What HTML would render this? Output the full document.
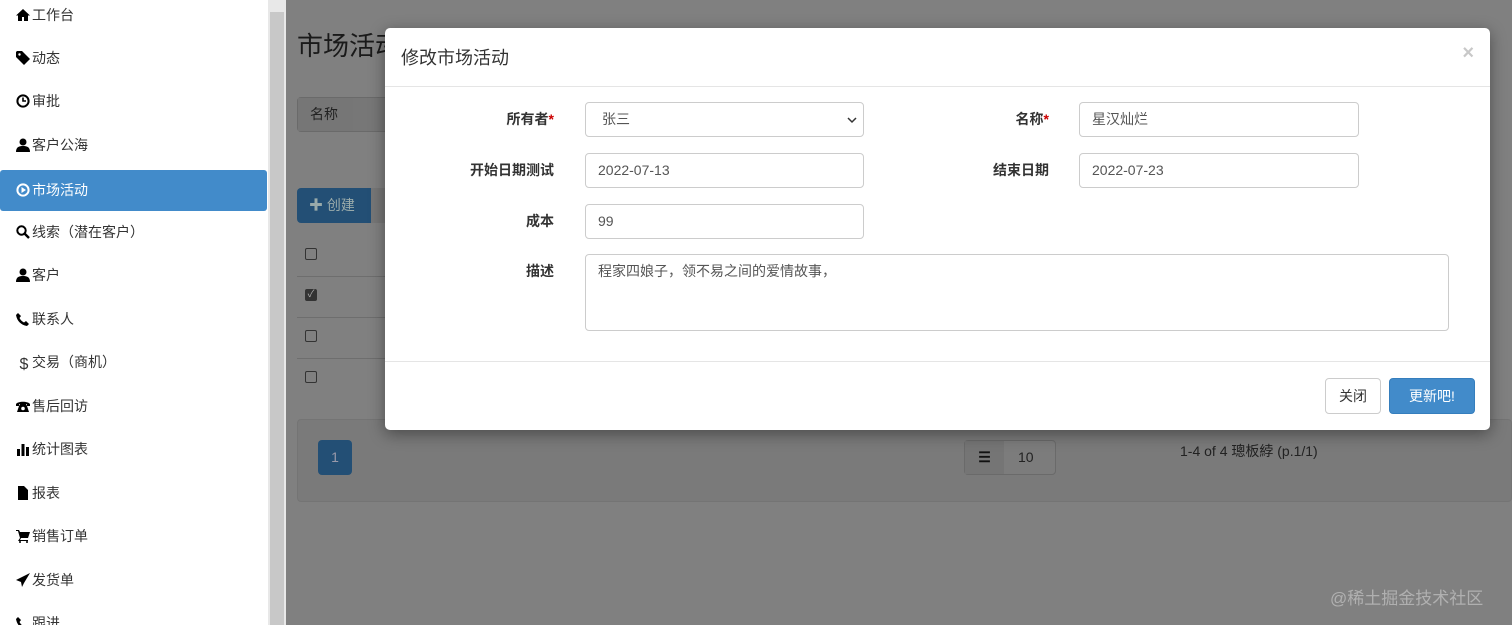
<!DOCTYPE html>
<html><head><meta charset="utf-8"><style>
*{box-sizing:border-box;margin:0;padding:0}
html,body{width:1512px;height:625px;overflow:hidden}
body{position:relative;background:#808080;font-family:"Liberation Sans","Noto Sans CJK SC",sans-serif;font-size:14px;color:#333}
.side{position:absolute;left:0;top:0;width:268px;height:625px;background:#fff;overflow:hidden}
.item{position:absolute;left:0;width:267px;height:41px;line-height:41px;padding-left:16px;font-size:14px;color:#333}
.item.act{background:#428bca;color:#fff;border-radius:3px}
.ic{display:inline-block;width:16px;height:14px;vertical-align:-2px}
.ic svg{width:14px;height:14px;display:block}
.sb{position:absolute;left:268px;top:0;width:18px;height:625px;background:#e8e8e8}
.sb i{position:absolute;left:2px;top:12px;width:14px;height:613px;background:#c8c8c8}
.dk{position:absolute}
.modal{position:absolute;left:385px;top:28px;width:1105px;height:402px;background:#fff;border-radius:5px;box-shadow:0 4px 16px rgba(0,0,0,.4)}
.hd{height:59px;border-bottom:1px solid #e5e5e5;padding:16px 16px;font-size:18px}
.x{position:absolute;right:16px;top:14px;font-size:20px;color:#c8c8c8;font-weight:bold}
.lb{position:absolute;font-weight:bold;text-align:right;font-size:14px}
.lb b{color:#c00}
.in{position:absolute;height:35px;border:1px solid #ccc;border-radius:4px;padding:0 12px;line-height:33px;color:#555;font-size:14px}
.ft{position:absolute;left:0;top:333px;width:100%;border-top:1px solid #e5e5e5}
.btn{position:absolute;height:36px;line-height:34px;border-radius:4px;font-size:14px;text-align:center}
</style></head><body>
<div class="side">
<div class="item" style="top:-5px"><span class="ic"><svg viewBox="0 0 14 14"><path d="M7 1L0 7.5h2V13h4V9h2v4h4V7.5h2z" fill="#000"/></svg></span>工作台</div>
<div class="item" style="top:38px"><span class="ic"><svg viewBox="0 0 14 14"><path d="M0 1v5l8 8 6-6-8-8H1z" fill="#000"/><circle cx="3.5" cy="3.5" r="1.2" fill="#fff"/></svg></span>动态</div>
<div class="item" style="top:81px"><span class="ic"><svg viewBox="0 0 14 14"><circle cx="7" cy="7" r="5.6" fill="none" stroke="#000" stroke-width="2"/><path d="M7 3.5V7h3" fill="none" stroke="#000" stroke-width="1.6"/></svg></span>审批</div>
<div class="item" style="top:125px"><span class="ic"><svg viewBox="0 0 14 14"><circle cx="7" cy="4" r="3.5" fill="#000"/><path d="M0 14c0-5 3-6 7-6s7 1 7 6z" fill="#000"/></svg></span>客户公海</div>
<div class="item act" style="top:170px"><span class="ic"><svg viewBox="0 0 14 14"><circle cx="7" cy="7" r="5.6" fill="none" stroke="#fff" stroke-width="2"/><path d="M5.5 4v6l4.5-3z" fill="#fff"/></svg></span>市场活动</div>
<div class="item" style="top:212px"><span class="ic"><svg viewBox="0 0 14 14"><circle cx="5.5" cy="5.5" r="4.2" fill="none" stroke="#000" stroke-width="2"/><path d="M8.5 8.5L13 13" stroke="#000" stroke-width="2.4"/></svg></span>线索（潜在客户）</div>
<div class="item" style="top:255px"><span class="ic"><svg viewBox="0 0 14 14"><circle cx="7" cy="4" r="3.5" fill="#000"/><path d="M0 14c0-5 3-6 7-6s7 1 7 6z" fill="#000"/></svg></span>客户</div>
<div class="item" style="top:299px"><span class="ic"><svg viewBox="0 0 14 14"><path d="M2 1l3 3-1.5 2c1 2 2.5 3.5 4.5 4.5L10 9l3 3-2 2C5 13 1 9 0 3z" fill="#000"/></svg></span>联系人</div>
<div class="item" style="top:342px"><span class="ic" style="font-weight:normal;font-size:16px;text-align:center">$</span>交易（商机）</div>
<div class="item" style="top:386px"><span class="ic"><svg viewBox="0 0 14 14"><path d="M0 5c2-3 12-3 14 0v2h-3V5H3v2H0zM3 7l1-2h6l1 2 2 6H1z" fill="#000"/><circle cx="7" cy="9.5" r="1.8" fill="#fff"/></svg></span>售后回访</div>
<div class="item" style="top:429px"><span class="ic"><svg viewBox="0 0 14 14"><path d="M1 7h3v7H1zM5.5 2h3v12h-3zM10 5h3v9h-3z" fill="#000"/></svg></span>统计图表</div>
<div class="item" style="top:473px"><span class="ic"><svg viewBox="0 0 14 14"><path d="M2 0h6l4 4v10H2z" fill="#000"/></svg></span>报表</div>
<div class="item" style="top:516px"><span class="ic"><svg viewBox="0 0 14 14"><path d="M0 1h3l1 2h10l-2 6H5l-1 2h8v1H2l2-3-2-7H0z" fill="#000"/><circle cx="4" cy="13" r="1" fill="#000"/><circle cx="11" cy="13" r="1" fill="#000"/></svg></span>销售订单</div>
<div class="item" style="top:560px"><span class="ic"><svg viewBox="0 0 14 14"><path d="M14 0L0 7l5 2 1 5 2-4z M14 0L5 9" fill="#000"/></svg></span>发货单</div>
<div class="item" style="top:603px"><span class="ic"><svg viewBox="0 0 14 14"><path d="M2 1l3 3-1.5 2c1 2 2.5 3.5 4.5 4.5L10 9l3 3-2 2C5 13 1 9 0 3z" fill="#000"/></svg></span>跟进</div>
</div>
<div class="sb"><i></i></div>
<div class="dk" style="left:297px;top:26px;font-size:26px;color:#1a1a1a">市场活动</div>
<div class="dk" style="left:297px;top:97px;width:100px;height:35px;border:1px solid #6a6a6a;border-radius:4px;background:#777"></div>
<div class="dk" style="left:298px;top:98px;width:55px;height:33px;background:#767676;line-height:33px;padding-left:12px;color:#222">名称</div>
<div class="dk" style="left:297px;top:188px;width:74px;height:35px;background:#234f75;border-radius:4px 0 0 4px;color:#9aa;line-height:35px;padding-left:12px">✚ 创建</div>
<div class="dk" style="left:371px;top:188px;width:20px;height:35px;background:#777"></div>
<div class="dk" style="left:297px;top:276px;width:100px;height:1px;background:#6e6e6e"></div>
<div class="dk" style="left:297px;top:317px;width:100px;height:1px;background:#6e6e6e"></div>
<div class="dk" style="left:297px;top:358px;width:100px;height:1px;background:#6e6e6e"></div>
<div class="dk" style="left:305px;top:248px;width:12px;height:12px;border:1px solid #333;border-radius:2px"></div>
<div class="dk" style="left:305px;top:289px;width:12px;height:12px;background:#333;border-radius:2px;color:#aaa;font-size:10px;line-height:12px;text-align:center">✓</div>
<div class="dk" style="left:305px;top:330px;width:12px;height:12px;border:1px solid #333;border-radius:2px"></div>
<div class="dk" style="left:305px;top:371px;width:12px;height:12px;border:1px solid #333;border-radius:2px"></div>
<div class="dk" style="left:297px;top:419px;width:1215px;height:83px;background:#7a7a7a;border:1px solid #747474;border-radius:4px"></div>
<div class="dk" style="left:318px;top:440px;width:34px;height:35px;background:#234f75;border-radius:4px;color:#99a;text-align:center;line-height:35px">1</div>
<div class="dk" style="left:964px;top:440px;width:92px;height:35px;border:1px solid #6a6a6a;border-radius:4px;background:#7c7c7c"></div>
<div class="dk" style="left:965px;top:441px;width:39px;height:33px;background:#757575;color:#111;text-align:center;line-height:33px;font-weight:bold">☰</div>
<div class="dk" style="left:1018px;top:449px;color:#222">10</div>
<div class="dk" style="left:1180px;top:441px;color:#222">1-4 of 4 璁板綍 (p.1/1)</div>
<div class="dk" style="left:1330px;top:584px;color:#b0b0b0;font-size:17px">@稀土掘金技术社区</div>

<div class="modal">
<div class="hd">修改市场活动</div><div class="x">×</div>
<div class="lb" style="right:936px;top:81px">所有者<b>*</b></div>
<div class="in" style="left:200px;top:74px;width:279px;padding-left:16px">张三<svg style="position:absolute;right:6px;top:13px" width="10" height="8" viewBox="0 0 10 8"><path d="M1 2l4 4 4-4" fill="none" stroke="#333" stroke-width="1.5"/></svg></div>
<div class="lb" style="right:441px;top:81px">名称<b>*</b></div>
<div class="in" style="left:694px;top:74px;width:280px">星汉灿烂</div>
<div class="lb" style="right:936px;top:132px">开始日期测试</div>
<div class="in" style="left:200px;top:125px;width:279px">2022-07-13</div>
<div class="lb" style="right:441px;top:132px">结束日期</div>
<div class="in" style="left:694px;top:125px;width:280px">2022-07-23</div>
<div class="lb" style="right:936px;top:183px">成本</div>
<div class="in" style="left:200px;top:176px;width:279px">99</div>
<div class="lb" style="right:936px;top:233px">描述</div>
<div class="in" style="left:200px;top:226px;width:864px;height:77px;line-height:32px">程家四娘子，领不易之间的爱情故事，</div>
<div class="ft"></div>
<div class="btn" style="left:940px;top:350px;width:56px;border:1px solid #ccc">关闭</div>
<div class="btn" style="left:1004px;top:350px;width:86px;background:#428bca;border:1px solid #357ebd;color:#fff">更新吧!</div>
</div>
</body></html>
